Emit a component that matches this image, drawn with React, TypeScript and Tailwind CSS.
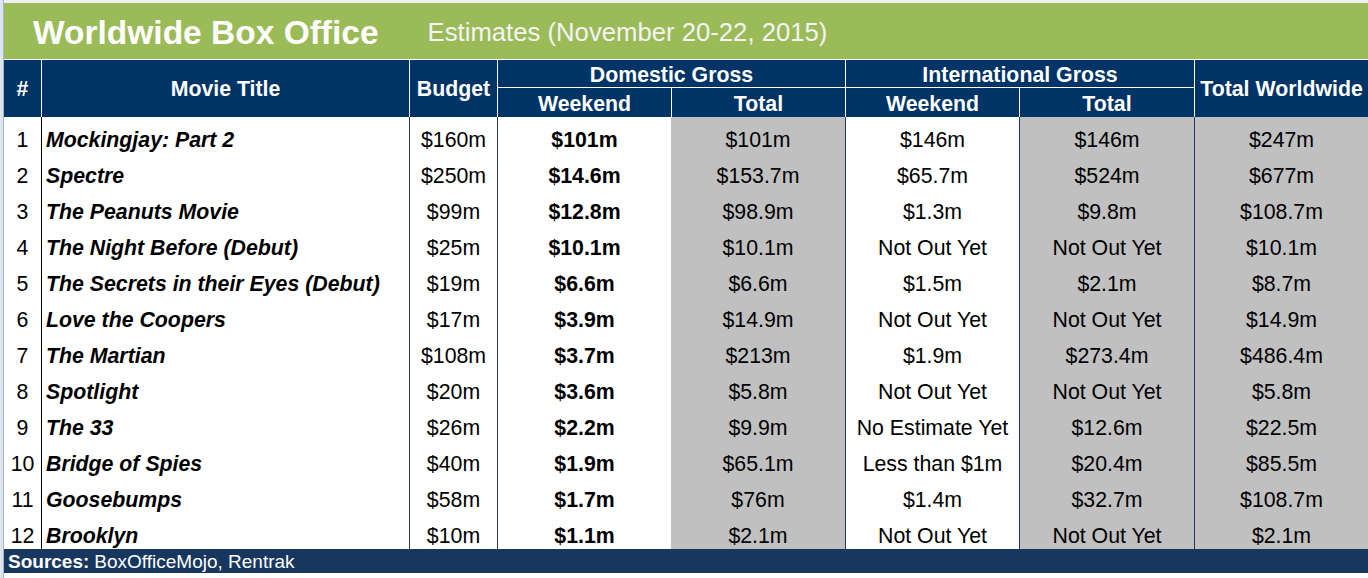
const FONT = { fontFamily: '"Liberation Sans", Arial, sans-serif' };

type Row = [string, string, string, string, string, string, string];

const ROWS: [number, ...Row][] = [
  [1, "Mockingjay: Part 2", "$160m", "$101m", "$101m", "$146m", "$146m", "$247m"],
  [2, "Spectre", "$250m", "$14.6m", "$153.7m", "$65.7m", "$524m", "$677m"],
  [3, "The Peanuts Movie", "$99m", "$12.8m", "$98.9m", "$1.3m", "$9.8m", "$108.7m"],
  [4, "The Night Before (Debut)", "$25m", "$10.1m", "$10.1m", "Not Out Yet", "Not Out Yet", "$10.1m"],
  [5, "The Secrets in their Eyes (Debut)", "$19m", "$6.6m", "$6.6m", "$1.5m", "$2.1m", "$8.7m"],
  [6, "Love the Coopers", "$17m", "$3.9m", "$14.9m", "Not Out Yet", "Not Out Yet", "$14.9m"],
  [7, "The Martian", "$108m", "$3.7m", "$213m", "$1.9m", "$273.4m", "$486.4m"],
  [8, "Spotlight", "$20m", "$3.6m", "$5.8m", "Not Out Yet", "Not Out Yet", "$5.8m"],
  [9, "The 33", "$26m", "$2.2m", "$9.9m", "No Estimate Yet", "$12.6m", "$22.5m"],
  [10, "Bridge of Spies", "$40m", "$1.9m", "$65.1m", "Less than $1m", "$20.4m", "$85.5m"],
  [11, "Goosebumps", "$58m", "$1.7m", "$76m", "$1.4m", "$32.7m", "$108.7m"],
  [12, "Brooklyn", "$10m", "$1.1m", "$2.1m", "Not Out Yet", "Not Out Yet", "$2.1m"],
];

const COLS = "grid grid-cols-[37px_368px_88px_174px_174px_174px_175px_174px]";

function HeaderGrid() {
  const cell = "flex items-center justify-center text-white font-bold text-[21.3px] leading-none";
  const tall = `${cell} row-span-2 pt-[2px]`;
  const short = `${cell} pt-[4px] border-l border-white`;
  return (
    <div className={`${COLS} grid-rows-[28px_29px] bg-[#003366]`}>
      <div className={tall}>#</div>
      <div className={`${tall} border-l border-white`}>Movie Title</div>
      <div className={`${tall} border-l border-white`}>Budget</div>
      <div className={`${short} col-span-2 border-b`}>Domestic Gross</div>
      <div className={`${short} col-span-2 border-b`}>International Gross</div>
      <div className={`${tall} border-l border-white`}>Total Worldwide</div>
      <div className={short}>Weekend</div>
      <div className={short}>Total</div>
      <div className={short}>Weekend</div>
      <div className={short}>Total</div>
    </div>
  );
}

function BodyRow({ row }: { row: [number, ...Row] }) {
  const [n, title, budget, dw, dt, iw, it, ww] = row;
  const base = "h-[36px] pt-[11px] leading-[24px] text-[21.3px] text-black whitespace-nowrap";
  const mid = `${base} text-center`;
  return (
    <div className={COLS}>
      <div className={mid}>{n}</div>
      <div className={`${base} pl-[4px] font-bold italic border-l border-black`}>{title}</div>
      <div className={`${mid} border-l border-[#1f3a60]`}>{budget}</div>
      <div className={`${mid} font-bold border-l border-[#1f3a60]`}>{dw}</div>
      <div className={`${mid} bg-[#c0c0c0]`}>{dt}</div>
      <div className={`${mid} border-l border-[#1f3a60]`}>{iw}</div>
      <div className={`${mid} bg-[#c0c0c0] border-l border-[#1f3a60]`}>{it}</div>
      <div className={`${mid} bg-[#c0c0c0] border-l border-[#1f3a60]`}>{ww}</div>
    </div>
  );
}

export default function App() {
  return (
    <div className="w-[1368px] h-[578px] bg-white flex overflow-hidden" style={FONT}>
      <div className="w-[4px] shrink-0 bg-[#dde4ee] border-r border-[#a8b6ca]" />
      <div className="flex-1 flex flex-col">
        <div className="h-[3px] bg-[#eef1f5]" />
        <div className="h-[57px] bg-[#9bbb59] border-b border-white flex items-center pl-[29px] pt-[4px]">
          <span className="text-white font-bold text-[33.5px] leading-none">Worldwide Box Office</span>
          <span className="ml-[49px] text-[#f4f4f4] text-[25.7px] leading-none">
            Estimates (November 20-22, 2015)
          </span>
        </div>
        <HeaderGrid />
        <div className="flex flex-col">
          {ROWS.map((r) => (
            <BodyRow key={r[0]} row={r} />
          ))}
        </div>
        <div className="h-[24px] bg-[#17375e] flex items-center pl-[4px] text-white text-[19px] leading-none">
          <span className="font-bold">Sources:</span>
          <span className="ml-[5px]">BoxOfficeMojo, Rentrak</span>
        </div>
      </div>
    </div>
  );
}
